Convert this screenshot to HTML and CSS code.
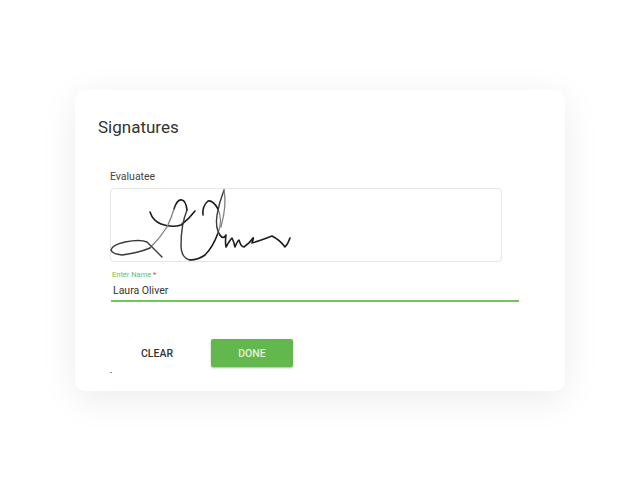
FILE: index.html
```html
<!DOCTYPE html>
<html>
<head>
  <meta charset="UTF-8">
  <title>Signatures</title>
  <link rel="stylesheet" href="styles.css">
</head>
<body>
  <div class="card">
    <h1>Signatures</h1>
    <div class="section">
      <div class="section-label">Evaluatee</div>
      <div class="signature-box">
        <svg class="signature" viewBox="110 188 392 74">
          <path d="M150 212Q153 221 161 224Q172 228 181 225Q189 219 195 211"/>
          <path d="M187 210Q186 201 182 200Q177 199 174 209"/>
          <path class="faint" d="M174 209Q171 219 167 227Q160 238 150 248"/>
          <path class="soft" d="M150 248Q138 253 122 255Q112 254 111 250Q112 245 125 242Q140 239 147 242Q152 247 162 257"/>
          <path class="soft" d="M187 210Q181 225 181 245Q181 258 190 260"/>
          <path d="M190 260Q198 260 205 255Q213 247 218 233"/>
          <path class="faint" d="M218 233Q223 220 218 209"/>
          <path d="M218 209Q213 200 208 201Q202 206 203 215"/>
          <path class="soft" d="M224 190Q219 203 217 215Q215 228 220 235"/>
          <path class="faint" d="M224 190Q227 205 221 227"/>
          <path d="M220 235Q223 240 226 235Q225 242 226 247Q230 240 232 238Q234 242 235 247Q238 240 239 240Q241 247 244 247Q250 243 253 238Q254 237 252 243Q262 240 272 236Q280 240 285 247Q288 244 290 238"/>
        </svg>
      </div>
      <div class="field">
        <label class="field-label">Enter Name <span class="required">*</span></label>
        <div class="field-value">Laura Oliver</div>
      </div>
    </div>
    <div class="actions">
      <button class="btn-clear">CLEAR</button>
      <button class="btn-done">DONE</button>
    </div>
    <div class="dot"></div>
  </div>
</body>
</html>
```

FILE: styles.css
```css
body {
  font-family: Roboto, sans-serif;
  margin: 0;
  height: 480px;
  display: flex;
  justify-content: center;
  align-items: center;
  background-color: white;
  color: #333;
}
.card {
  box-sizing: border-box;
  width: 490px;
  height: 301px;
  padding: 27px 23px 0;
  background-color: white;
  border-radius: 10px;
  box-shadow: 0 8px 36px rgba(0, 0, 0, 0.08);
}
h1 {
  margin: 0;
  font-size: 17px;
  line-height: 20px;
  font-weight: 400;
  color: #333;
}
.section {
  margin-top: 33px;
  padding-left: 12px;
}
.section-label {
  font-size: 10.5px;
  line-height: 14px;
  color: #444;
}
.signature-box {
  box-sizing: border-box;
  width: 392px;
  height: 74px;
  margin-top: 4px;
  border: 1px solid #e6e6e6;
  border-radius: 4px;
}
.signature {
  display: block;
  width: 392px;
  height: 74px;
  margin: -1px;
  fill: none;
  stroke: #1c1c1c;
  stroke-width: 1.6;
  stroke-linecap: round;
  stroke-linejoin: round;
}
.signature .soft {
  stroke: #3a3a3a;
  stroke-width: 1.4;
}
.signature .faint {
  stroke: #808080;
  stroke-width: 1.3;
}
.field {
  box-sizing: border-box;
  width: 408px;
  height: 40px;
  margin-left: 1px;
  padding-top: 8px;
  border-bottom: 2px solid #72c45c;
}
.field-label {
  display: block;
  padding-left: 1px;
  font-size: 7.5px;
  line-height: 10px;
  color: #6abf55;
}
.required {
  color: #e53935;
}
.field-value {
  margin-top: 4px;
  padding-left: 2px;
  font-size: 10.5px;
  line-height: 14px;
  color: #333;
}
.actions {
  display: flex;
  align-items: center;
  margin-top: 37px;
  padding-left: 32px;
  gap: 27px;
}
button {
  height: 28px;
  border: none;
  border-radius: 2px;
  font-family: Roboto, sans-serif;
  font-size: 10.5px;
  font-weight: 500;
  padding: 1px 0 0;
}
.btn-clear {
  width: 54px;
  background: none;
  color: #333;
}
.btn-done {
  width: 82px;
  background-color: #62b84c;
  color: #e3f2dc;
  box-shadow: 0 1px 2px rgba(0, 0, 0, 0.3);
}
.dot {
  width: 2px;
  height: 1px;
  margin: 5px 0 0 12px;
  background-color: #888;
}
```
